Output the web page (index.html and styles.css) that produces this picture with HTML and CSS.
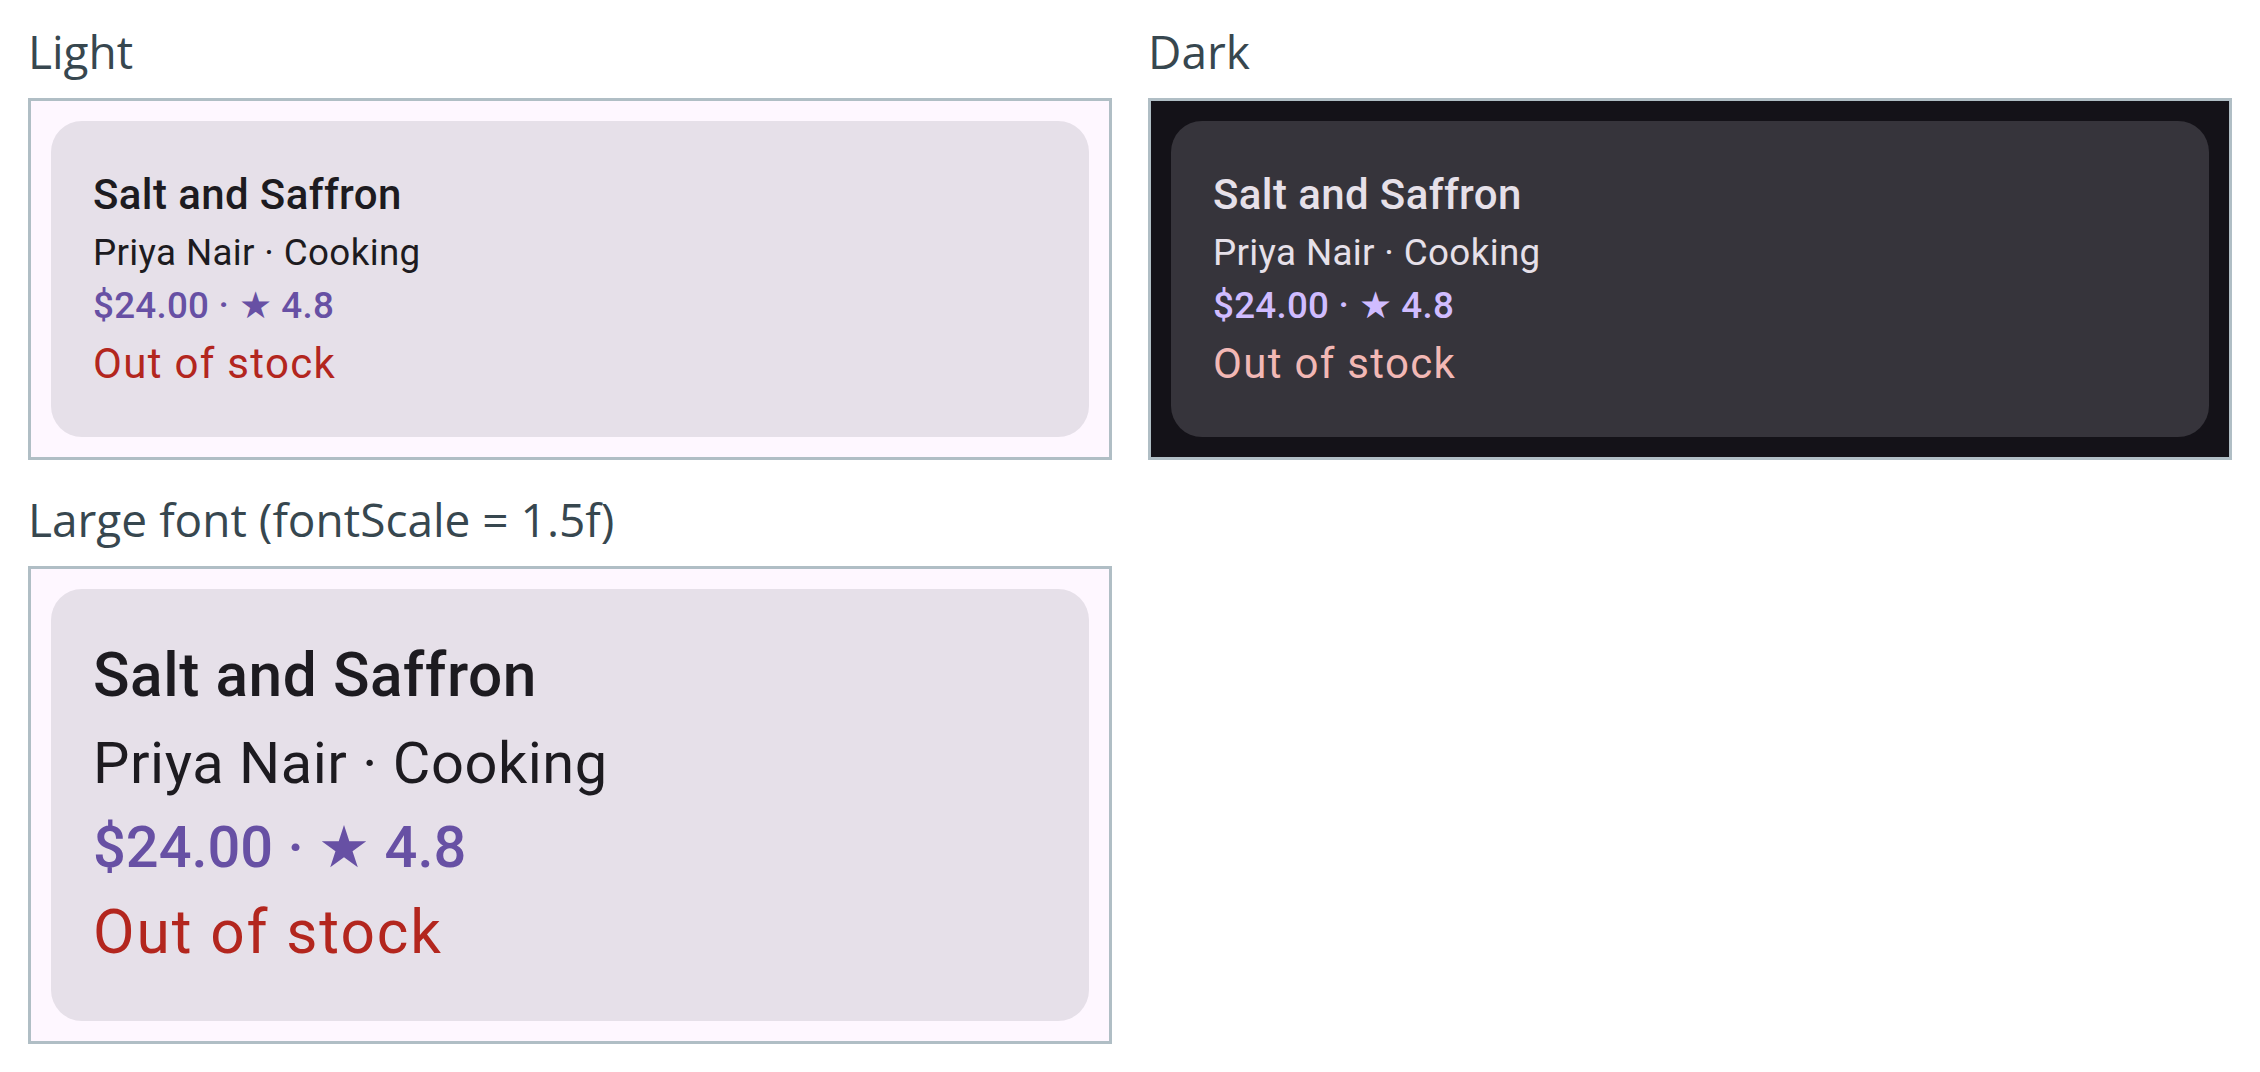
FILE: index.html
```html
<!DOCTYPE html>
<html lang="en">
<head>
  <meta charset="UTF-8" />
  <meta name="viewport" content="width=device-width, initial-scale=1.0" />
  <title>Course card previews</title>
  <link rel="stylesheet" href="styles.css">
</head>
<body>
  <div class="previews">
    <section class="preview">
      <h2 class="preview-label">Light</h2>
      <div class="frame frame-light">
        <div class="card">
          <div class="card-title">Salt and Saffron</div>
          <div class="card-subtitle">Priya Nair · Cooking</div>
          <div class="card-meta">$24.00 · ★ 4.8</div>
          <div class="card-stock">Out of stock</div>
        </div>
      </div>
    </section>

    <section class="preview">
      <h2 class="preview-label">Dark</h2>
      <div class="frame frame-dark">
        <div class="card">
          <div class="card-title">Salt and Saffron</div>
          <div class="card-subtitle">Priya Nair · Cooking</div>
          <div class="card-meta">$24.00 · ★ 4.8</div>
          <div class="card-stock">Out of stock</div>
        </div>
      </div>
    </section>

    <section class="preview preview-large">
      <h2 class="preview-label">Large font (fontScale = 1.5f)</h2>
      <div class="frame frame-light">
        <div class="card card-large">
          <div class="card-title">Salt and Saffron</div>
          <div class="card-subtitle">Priya Nair · Cooking</div>
          <div class="card-meta">$24.00 · ★ 4.8</div>
          <div class="card-stock">Out of stock</div>
        </div>
      </div>
    </section>
  </div>
</body>
</html>
```

FILE: styles.css
```css
body {
  margin: 0;
  padding: 26px 28px;
  background: #ffffff;
  font-family: 'Open Sans', 'Noto Sans', sans-serif;
}

.previews {
  display: grid;
  grid-template-columns: 1fr 1fr;
  column-gap: 36px;
  row-gap: 34px;
  align-items: start;
}

.preview-label {
  margin: 0 0 22px 0;
  font-size: 46px;
  font-weight: 400;
  line-height: 50px;
  color: #37474f;
}

/* device frame around each preview */
.frame {
  border: 3px solid #b0bec5;
  padding: 20px;
}

.frame-light {
  background: #fef7ff;
  --card-bg: #e6e0e9;
  --on-surface: #1d1b20;
  --primary: #6750a4;
  --error: #b3261e;
}

.frame-dark {
  background: #141218;
  --card-bg: #36343b;
  --on-surface: #e6e0e9;
  --primary: #d0bcff;
  --error: #f2b8b5;
}

/* 1dp = 2.625px */
.card {
  background: var(--card-bg);
  border-radius: 31px;
  padding: 42px 42px 43px;
  display: flex;
  flex-direction: column;
  font-family: Roboto, 'Noto Sans', sans-serif;
  color: var(--on-surface);
}

.card-title {
  font-size: 42px;
  font-weight: 500;
  line-height: 63px;
  letter-spacing: 0.39px;
}

.card-subtitle {
  font-size: 36.75px;
  line-height: 53px;
  letter-spacing: 0.35px;
}

.card-meta {
  font-size: 36.75px;
  font-weight: 500;
  line-height: 54px;
  letter-spacing: 0.26px;
  color: var(--primary);
}

.card-stock {
  font-size: 42px;
  line-height: 61px;
  letter-spacing: 1.31px;
  color: var(--error);
}

/* same card with fontScale 1.5 (non-linear scaling) */
.card-large {
  padding-bottom: 44px;
}

.card-large .card-title {
  font-size: 60.4px;
  line-height: 90.6px;
  letter-spacing: 0.56px;
}

.card-large .card-subtitle {
  font-size: 57.75px;
  line-height: 83px;
  letter-spacing: 0.55px;
}

.card-large .card-meta {
  font-size: 57.75px;
  line-height: 84px;
  letter-spacing: 0;
}

.card-large .card-stock {
  font-size: 60.4px;
  line-height: 88px;
  letter-spacing: 1.9px;
}
```
